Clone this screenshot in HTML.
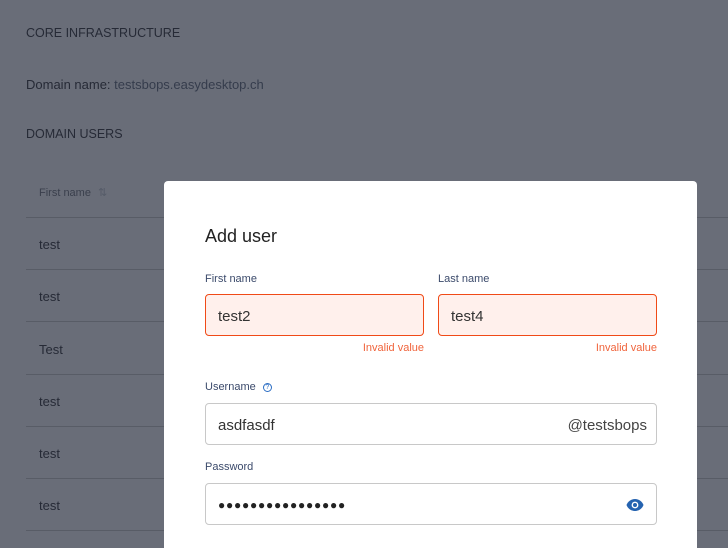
<!DOCTYPE html>
<html style="width:728px;height:548px;overflow:hidden"><head><meta charset="utf-8"><style>
*{margin:0;padding:0;box-sizing:border-box}
body{width:728px;height:548px;overflow:hidden;background:#696d78;font-family:"Liberation Sans",sans-serif;position:relative}
.t{position:absolute;color:#262a36;font-size:13px}
.line{position:absolute;left:26px;width:702px;height:1px;background:#585c66}
.modal{position:absolute;left:164px;top:181px;width:533px;height:367px;background:#fff;border-radius:4px 4px 0 0}
.lbl{position:absolute;font-size:11px;color:#3b4a6b}
.inp{position:absolute;height:42px;border:1px solid #c8c8c8;border-radius:4px;font-size:15px;color:#333;padding-left:12px;line-height:43px}
.err{background:#fff0ec;border-color:#f04a17}
.ev{position:absolute;font-size:11px;color:#f0643c;width:150px;text-align:right}
</style></head><body>
<div class="t" style="left:26px;top:26px;font-size:12.5px">CORE INFRASTRUCTURE</div>
<div class="t" style="left:26px;top:77px">Domain name: <span style="color:#353c4c">testsbops.easydesktop.ch</span></div>
<div class="t" style="left:26px;top:127px;font-size:12.5px">DOMAIN USERS</div>
<div class="t" style="left:39px;top:186px;font-size:11px;color:#3a3f4c">First name <span style="color:#555b68;margin-left:4px">⇅</span></div>
<div class="line" style="top:217px"></div>
<div class="t" style="left:39px;top:237px">test</div>
<div class="line" style="top:269px"></div>
<div class="t" style="left:39px;top:289px">test</div>
<div class="line" style="top:321px"></div>
<div class="t" style="left:39px;top:342px">Test</div>
<div class="line" style="top:374px"></div>
<div class="t" style="left:39px;top:394px">test</div>
<div class="line" style="top:426px"></div>
<div class="t" style="left:39px;top:446px">test</div>
<div class="line" style="top:478px"></div>
<div class="t" style="left:39px;top:498px">test</div>
<div class="line" style="top:530px"></div>
<div class="modal">
<div style="position:absolute;left:41px;top:45px;font-size:18px;color:#222">Add user</div>
<div class="lbl" style="left:41px;top:92px">First name</div>
<div class="lbl" style="left:274px;top:92px">Last name</div>
<div class="inp err" style="left:41px;top:113px;width:219px">test2</div>
<div class="inp err" style="left:274px;top:113px;width:219px">test4</div>
<div class="ev" style="left:110px;top:161px">Invalid value</div>
<div class="ev" style="left:343px;top:161px">Invalid value</div>
<div class="lbl" style="left:41px;top:200px">Username <span style="display:inline-block;width:9px;height:9px;border:1px solid #2c6ec4;border-radius:50%;font-size:7px;line-height:7px;text-align:center;color:#2c6ec4;margin-left:4px;vertical-align:1px">?</span></div>
<div class="inp" style="left:41px;top:222px;width:452px">asdfasdf<span style="position:absolute;right:9px;top:0;color:#444">@testsbops</span></div>
<div class="lbl" style="left:41px;top:280px">Password</div>
<div class="inp" style="left:41px;top:302px;width:452px;font-size:12px;letter-spacing:0.75px;color:#222">●●●●●●●●●●●●●●●●
<svg style="position:absolute;right:12px;top:15px" width="18" height="12" viewBox="0 0 18 12"><path d="M9 0C5 0 1.8 2.5 0.5 6 1.8 9.5 5 12 9 12s7.2-2.5 8.5-6C16.2 2.5 13 0 9 0z" fill="#2563b0"/><circle cx="9" cy="6" r="3.4" fill="#fff"/><circle cx="9" cy="6" r="2" fill="#2563b0"/></svg></div>
</div>
</body></html>
